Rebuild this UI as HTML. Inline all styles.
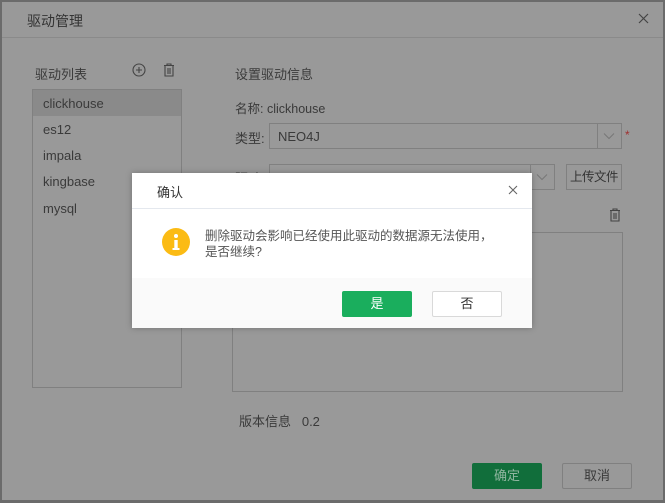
<!DOCTYPE html><html><head><meta charset="utf-8"><style>
*{margin:0;padding:0;box-sizing:border-box}
body{width:665px;height:503px;background:#6b6b6b;position:relative;overflow:hidden;font-family:"Liberation Sans","Noto Sans CJK SC",sans-serif;font-size:12px;color:#3a3a3a}
.a{position:absolute;white-space:nowrap}
.outer{left:2px;top:2px;width:661px;height:498px;background:#999}
.b{border:1px solid #808080}
</style></head><body>
<div class="a outer"></div>
<div class="a" style="left:27px;top:11px;font-size:14px;color:#333">驱动管理</div>
<svg class="a" style="left:638px;top:13px" width="11" height="11"><path d="M1 1L10 10M10 1L1 10" stroke="#444" stroke-width="1.2"/></svg>
<div class="a" style="left:2px;top:37px;width:661px;height:1px;background:#8a8a8a"></div>
<div class="a" style="left:35px;top:64px;font-size:13px">驱动列表</div>
<svg class="a" style="left:132px;top:63px" width="14" height="14"><circle cx="7" cy="7" r="6" fill="none" stroke="#444" stroke-width="1.1"/><path d="M4 7h6M7 4v6" stroke="#444" stroke-width="1.1"/></svg>
<svg class="a" style="left:163px;top:63px" width="12" height="14"><path d="M1 2.5h10M4 2.5V1h4v1.5M2 2.5v10.5h8V2.5M5 5v6M7 5v6" fill="none" stroke="#444" stroke-width="1.1"/></svg>
<div class="a b" style="left:32px;top:89px;width:150px;height:299px"></div>
<div class="a" style="left:33px;top:90px;width:148px;height:26px;background:#8a8a8a"></div>
<div class="a" style="left:43px;top:96px;font-size:13px">clickhouse</div>
<div class="a" style="left:43px;top:122px;font-size:13px">es12</div>
<div class="a" style="left:43px;top:148px;font-size:13px">impala</div>
<div class="a" style="left:43px;top:174px;font-size:13px">kingbase</div>
<div class="a" style="left:43px;top:201px;font-size:13px">mysql</div>
<div class="a" style="left:235px;top:64px;font-size:13px">设置驱动信息</div>
<div class="a" style="left:235px;top:98px;font-size:12.5px">名称: clickhouse</div>
<div class="a" style="left:235px;top:128px;font-size:13px">类型:</div>
<div class="a" style="left:235px;top:168px;font-size:13px">驱动:</div>
<div class="a b" style="left:269px;top:123px;width:353px;height:26px"></div>
<div class="a" style="left:597px;top:124px;width:1px;height:24px;background:#808080"></div>
<svg class="a" style="left:603px;top:132px" width="12" height="8"><path d="M1 1.5L6 6.5L11 1.5" fill="none" stroke="#777" stroke-width="1"/></svg>
<div class="a" style="left:278px;top:129px;font-size:13px">NEO4J</div>
<div class="a" style="left:625px;top:128px;color:#a03030">*</div>
<div class="a b" style="left:269px;top:164px;width:286px;height:26px"></div>
<div class="a" style="left:530px;top:165px;width:1px;height:24px;background:#808080"></div>
<svg class="a" style="left:536px;top:173px" width="12" height="8"><path d="M1 1.5L6 6.5L11 1.5" fill="none" stroke="#777" stroke-width="1"/></svg>
<div class="a b" style="left:566px;top:164px;width:56px;height:26px;line-height:24px;text-align:center;font-size:12.5px;color:#333;letter-spacing:-0.5px">上传文件</div>
<svg class="a" style="left:609px;top:208px" width="12" height="14"><path d="M1 2.5h10M4 2.5V1h4v1.5M2 2.5v10.5h8V2.5M5 5v6M7 5v6" fill="none" stroke="#444" stroke-width="1.1"/></svg>
<div class="a b" style="left:232px;top:232px;width:391px;height:160px"></div>
<div class="a" style="left:239px;top:411px;font-size:13px">版本信息&nbsp;&nbsp;&nbsp;0.2</div>
<div class="a" style="left:472px;top:463px;width:70px;height:26px;background:#116e3b;color:#8fb59f;text-align:center;line-height:26px;font-size:13px;border-radius:2px">确定</div>
<div class="a b" style="left:562px;top:463px;width:70px;height:26px;text-align:center;line-height:24px;font-size:13px;border-radius:2px">取消</div>
<div class="a" style="left:132px;top:173px;width:400px;height:155px;background:#fff;box-shadow:0 0 6px rgba(0,0,0,.25)"></div>
<div class="a" style="left:132px;top:278px;width:400px;height:50px;background:#fafafa"></div>
<div class="a" style="left:132px;top:208px;width:400px;height:1px;background:#e4e8ee"></div>
<div class="a" style="left:157px;top:182px;font-size:13px;color:#333">确认</div>
<svg class="a" style="left:508px;top:185px" width="10" height="10"><path d="M1 1L9 9M9 1L1 9" stroke="#666" stroke-width="1.1"/></svg>
<svg class="a" style="left:162px;top:228px" width="28" height="28"><circle cx="14" cy="14" r="14" fill="#fbbb14"/><rect x="12.3" y="12" width="3.4" height="9" fill="#fff"/><circle cx="14" cy="8" r="2" fill="#fff"/><rect x="10.5" y="20" width="7" height="2" fill="#fff"/></svg>
<div class="a" style="left:205px;top:228px;font-size:12.5px;color:#555;line-height:16px">删除驱动会影响已经使用此驱动的数据源无法使用，<br>是否继续?</div>
<div class="a" style="left:342px;top:291px;width:70px;height:26px;background:#1aae5d;color:#fff;text-align:center;line-height:26px;font-size:13px;border-radius:2px">是</div>
<div class="a" style="left:432px;top:291px;width:70px;height:26px;border:1px solid #d9d9d9;background:#fff;text-align:center;line-height:24px;font-size:13px;color:#333;border-radius:2px">否</div>
</body></html>
